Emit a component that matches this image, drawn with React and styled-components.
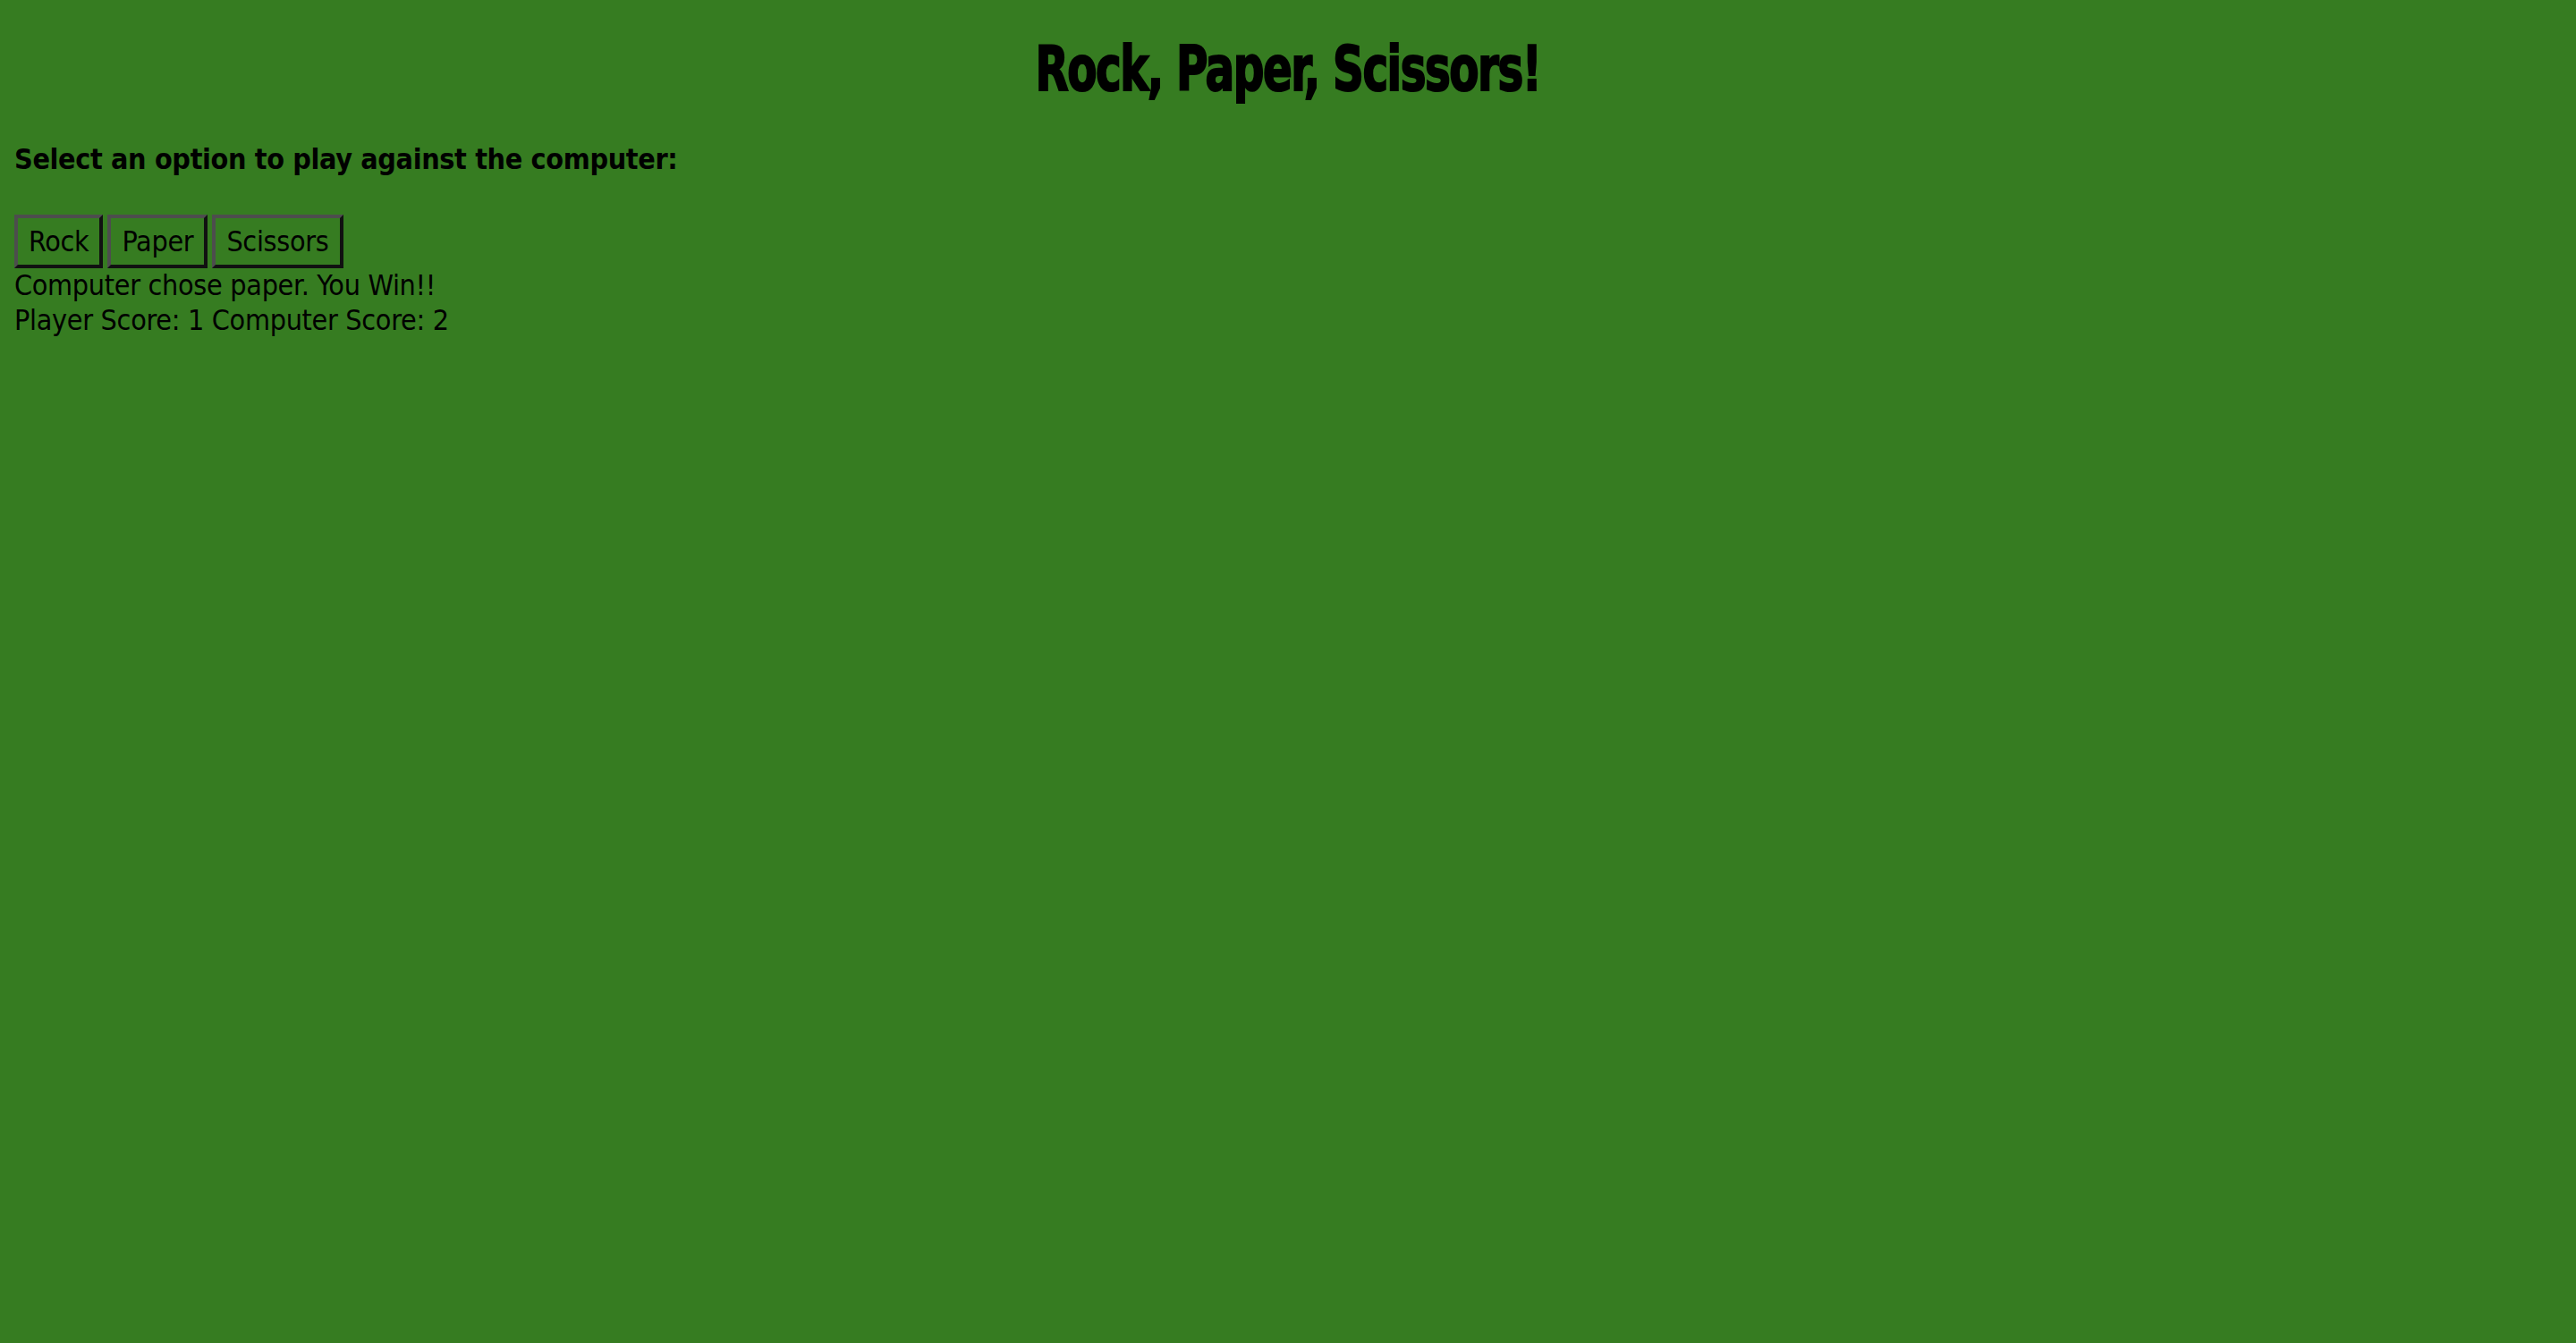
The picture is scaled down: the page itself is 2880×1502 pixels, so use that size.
import React from "react";
import styled, { createGlobalStyle } from "styled-components";

const Global = createGlobalStyle`
  html, body {
    margin: 0;
    padding: 0;
    background: #367c21;
  }
  body {
    min-height: 1502px;
    font-family: "DejaVu Sans Condensed", "DejaVu Sans", sans-serif;
    color: #000;
  }
`;

const Page = styled.main`
  display: flex;
  flex-direction: column;
  padding: 38px 16px 0;
`;

const Title = styled.h1`
  margin: 0;
  align-self: center;
  font-family: "DejaVu Sans Condensed", "DejaVu Sans", sans-serif;
  font-weight: 900;
  font-size: 70px;
  line-height: 78px;
  letter-spacing: -2px;
  -webkit-text-stroke: 2px #000;
  transform: scaleX(0.77);
  white-space: nowrap;
`;

const Prompt = styled.h4`
  margin: 43px 0 0;
  font-size: 32px;
  font-weight: bold;
  line-height: 39px;
  letter-spacing: -0.35px;
`;

const ButtonRow = styled.div`
  display: flex;
  gap: 5px;
  margin-top: 42px;
`;

const Choice = styled.button`
  font-family: inherit;
  font-size: 32px;
  line-height: 38px;
  letter-spacing: -0.3px;
  color: #000;
  background: transparent;
  padding: 7px 12px;
  border-width: 4px;
  border-style: solid;
  border-color: #4d4d4d #111 #111 #4d4d4d;
  cursor: pointer;
`;

const Line = styled.div`
  font-size: 32px;
  line-height: 39px;
  letter-spacing: -0.3px;
`;

export default function App() {
  return (
    <>
      <Global />
      <Page>
        <Title>Rock, Paper, Scissors!</Title>
        <Prompt>Select an option to play against the computer:</Prompt>
        <ButtonRow>
          <Choice>Rock</Choice>
          <Choice>Paper</Choice>
          <Choice>Scissors</Choice>
        </ButtonRow>
        <Line>Computer chose paper. You Win!!</Line>
        <Line>Player Score: 1 Computer Score: 2</Line>
      </Page>
    </>
  );
}
